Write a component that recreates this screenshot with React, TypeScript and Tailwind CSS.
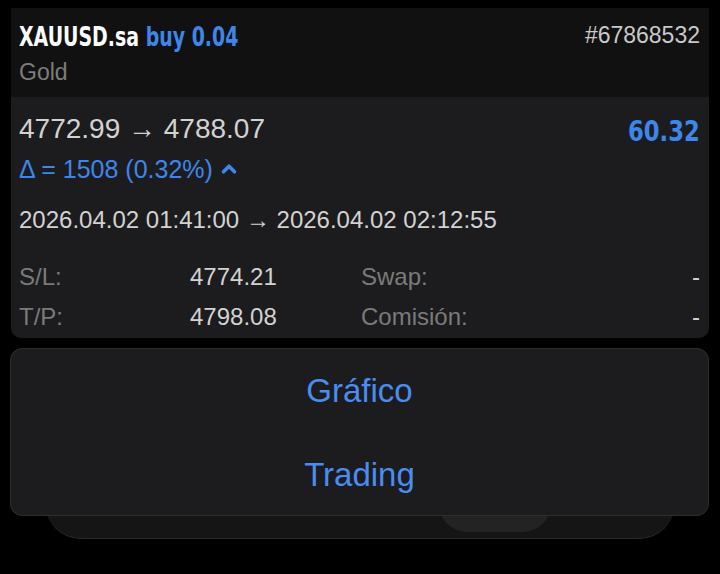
import { ChevronUp } from "lucide-react";

const cond = { fontFamily: '"DejaVu Sans Condensed", "Roboto", sans-serif' };

export default function App() {
  const rows = [
    { label: "S/L:", value: "4774.21", label2: "Swap:", value2: "-" },
    { label: "T/P:", value: "4798.08", label2: "Comisión:", value2: "-" },
  ];

  return (
    <div className="w-[720px] h-[574px] bg-black overflow-hidden font-['Liberation_Sans',Arial,sans-serif] pt-[8px]">
      {/* position card */}
      <div className="mx-[11px] w-[698px] rounded-b-[10px] overflow-hidden">
        <div className="bg-[#111111] h-[89px] px-[8px] pt-[13px]">
          <div className="flex items-start justify-between">
            <div
              className="text-[27px] leading-[32px] font-bold whitespace-nowrap origin-left scale-x-[0.78]"
              style={cond}
            >
              <span className="text-white">XAUUSD.sa</span>{" "}
              <span className="text-[#3f86ea]">buy 0.04</span>
            </div>
            <div className="text-[23px] leading-[28px] text-[#c9c9c9] mr-[1px]">#67868532</div>
          </div>
          <div className="text-[23px] leading-[28px] text-[#7d7d7d] mt-[5px]">Gold</div>
        </div>

        <div className="bg-[#1c1c1e] h-[241px] px-[8px] pt-[15px]">
          <div className="flex items-start justify-between h-[34px]">
            <div className="text-[28px] leading-[34px] text-[#d2d2d2]">4772.99 → 4788.07</div>
            <div
              className="text-[28px] leading-[34px] font-bold text-[#3f86ea] mt-[3px] mr-[1px] origin-right scale-x-[0.9]"
              style={cond}
            >
              60.32
            </div>
          </div>
          <div className="flex items-center text-[25px] leading-[30px] text-[#3f86ea] mt-[8px]">
            <span>Δ = 1508 (0.32%)</span>
            <ChevronUp className="w-[22px] h-[22px] ml-[5px]" strokeWidth={4} />
          </div>
          <div className="text-[24px] leading-[28px] text-[#d2d2d2] mt-[22px] whitespace-nowrap">
            2026.04.02 01:41:00 → 2026.04.02 02:12:55
          </div>
          <div className="mt-[28px] flex flex-col gap-[10px]">
            {rows.map((r) => (
              <div key={r.label} className="flex text-[24px] leading-[30px]">
                <span className="w-[171px] text-[#7a7a7a]">{r.label}</span>
                <span className="w-[171px] text-[#d2d2d2]">{r.value}</span>
                <span className="flex-1 text-[#7a7a7a]">{r.label2}</span>
                <span className="text-[#d2d2d2] mr-[1px]">{r.value2}</span>
              </div>
            ))}
          </div>
        </div>
      </div>

      {/* action sheet */}
      <div className="relative z-10 mt-[10px] mx-[10px] w-[699px] h-[168px] rounded-[12px] bg-[#1c1c1e] border border-[#2e2e30] flex flex-col items-center justify-center text-[33px] leading-[36px] text-[#4a8cf0]">
        <div className="mt-[2px]">Gráfico</div>
        <div className="mt-[48px]">Trading</div>
      </div>

      {/* panel behind the sheet */}
      <div className="relative -mt-[20px] mx-[45px] h-[43px] rounded-b-[36px] bg-[#151515] border-b border-[#2a2a2a] flex justify-center">
        <div className="ml-[270px] w-[112px] h-[36px] rounded-b-[28px] bg-[#232323]" />
      </div>
    </div>
  );
}
